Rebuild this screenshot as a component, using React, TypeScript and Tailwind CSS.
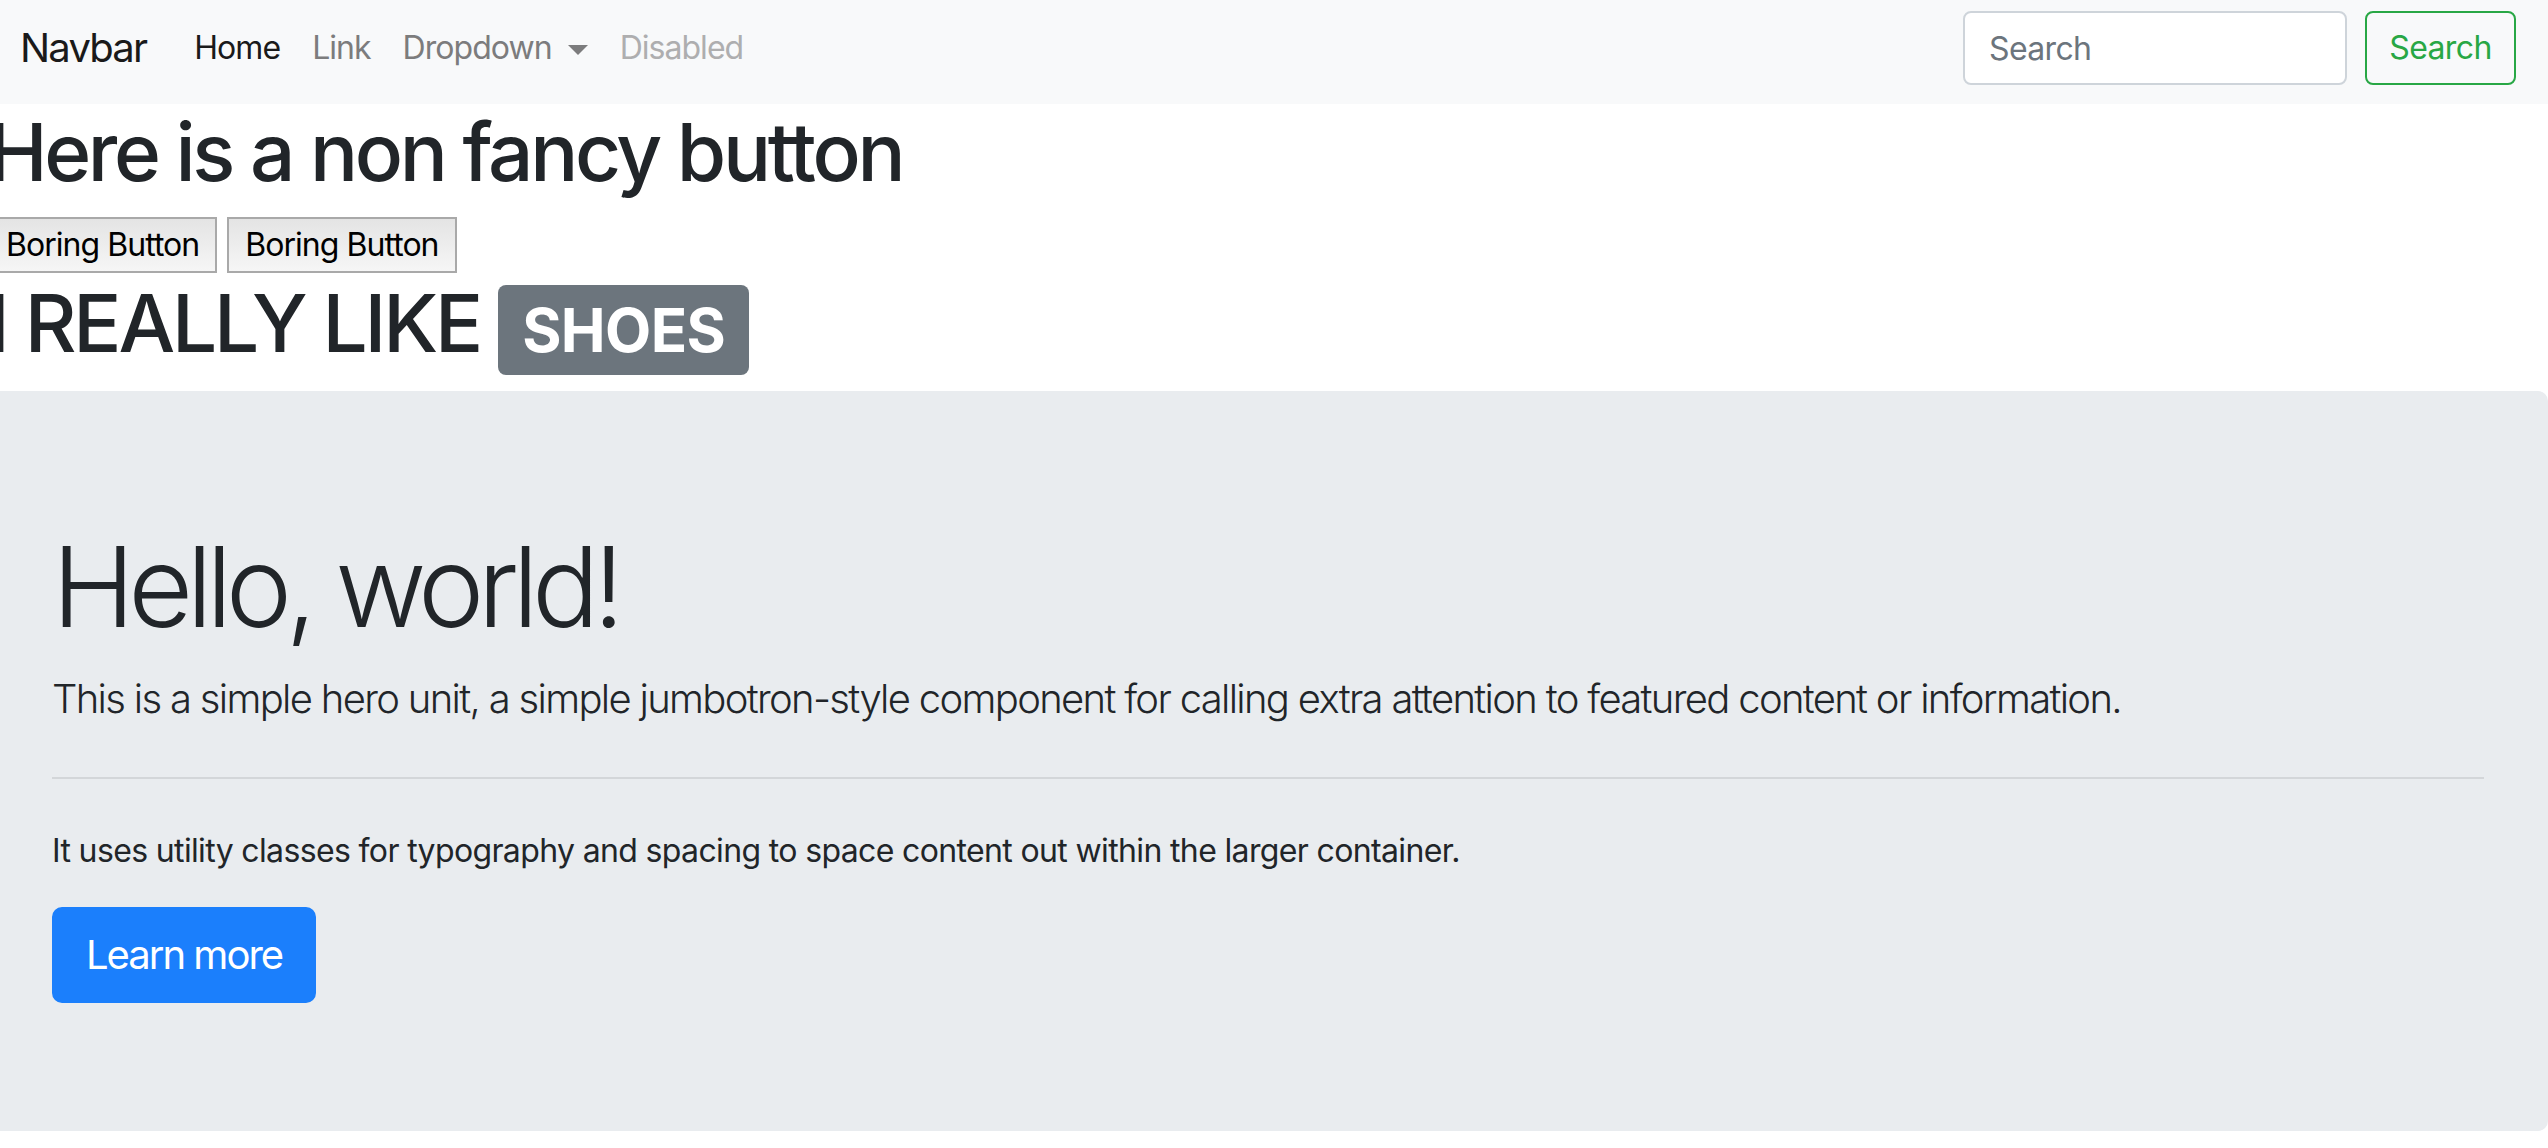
import React from 'react';

const NavLink: React.FC<{ label: string; tone: string; caret?: boolean }> = ({ label, tone, caret }) => (
  <li>
    <a className={`flex items-center px-[16px] text-[32px] leading-[48px] tracking-[-0.03em] ${tone}`}>
      {label}
      {caret && (
        <span className="ml-[16px] mt-[4px] inline-block h-0 w-0 border-x-[10px] border-t-[10px] border-x-transparent border-t-[#7c7c7d]" />
      )}
    </a>
  </li>
);

const BoringButton: React.FC<{ label: string }> = ({ label }) => (
  <button className="h-[56px] px-[16px] border-2 border-[#a9a9a9] bg-gradient-to-b from-[#e4e4e4] to-[#f6f6f6] text-[32px] leading-[38px] tracking-[-0.03em] text-black">
    {label}
  </button>
);

export default function App() {
  return (
    <div className="w-full overflow-hidden bg-white text-[#212529] [font-family:Inter,'Noto_Sans',sans-serif]">
      <div className="-ml-[12px] w-[2560px]">
        <nav className="h-[104px] bg-[#f8f9fa] px-[32px] pt-[11px]">
          <div className="flex h-[74px] items-center">
            <a className="mr-[32px] text-[40px] leading-[60px] tracking-[-0.045em] text-[#1a1a1a]">Navbar</a>
            <ul className="flex items-center">
              <NavLink label="Home" tone="text-[#1a1a1a]" />
              <NavLink label="Link" tone="text-[#7c7c7d]" />
              <NavLink label="Dropdown" tone="text-[#7c7c7d]" caret />
              <NavLink label="Disabled" tone="text-[#aeaeaf]" />
            </ul>
            <form className="ml-auto flex items-center gap-[18px]">
              <input
                placeholder="Search"
                className="h-[74px] w-[384px] rounded-[8px] border-2 border-[#ced4da] bg-white px-[24px] text-[32px] tracking-[-0.02em] placeholder:text-[#6c757d] outline-none"
              />
              <button type="button" className="h-[74px] w-[151px] rounded-[8px] border-2 border-[#28a745] text-[32px] tracking-[-0.02em] text-[#28a745]">
                Search
              </button>
            </form>
          </div>
        </nav>

        <h1 className="mb-[16px] text-[80px] font-medium leading-[96px] tracking-[-0.042em]">Here is a non fancy button</h1>
        <div className="flex gap-[10px] pt-[1px] pb-[2px]">
          <BoringButton label="Boring Button" />
          <BoringButton label="Boring Button" />
        </div>
        <h1 className="mb-[16px] text-[80px] font-medium leading-[96px] tracking-[-0.04em]">
          I REALLY LIKE{' '}
          <span className="inline-block rounded-[8px] bg-[#6c757d] px-[24px] py-[15px] align-baseline text-[60px] font-bold leading-[60px] tracking-[-0.01em] text-white">
            SHOES
          </span>
        </h1>

        <div className="mb-[32px] rounded-[10px] bg-[#e9ecef] px-[64px] py-[128px]">
          <h1 className="mb-[16px] text-[112px] font-light leading-[134px] tracking-[-0.059em]">Hello, world!</h1>
          <p className="text-[40px] font-light leading-[60px] tracking-[-0.042em]">
            This is a simple hero unit, a simple jumbotron-style component for calling extra attention to featured content or information.
          </p>
          <hr className="my-[48px] border-t-2 border-[#d3d6d9]" />
          <p className="mb-[32px] text-[32px] leading-[48px] tracking-[-0.02em]">
            It uses utility classes for typography and spacing to space content out within the larger container.
          </p>
          <a className="inline-block rounded-[10px] border-2 border-[#1b7ffc] bg-[#1b7ffc] px-[32px] py-[16px] text-[40px] leading-[60px] tracking-[-0.05em] text-white">
            Learn more
          </a>
        </div>
      </div>
    </div>
  );
}
